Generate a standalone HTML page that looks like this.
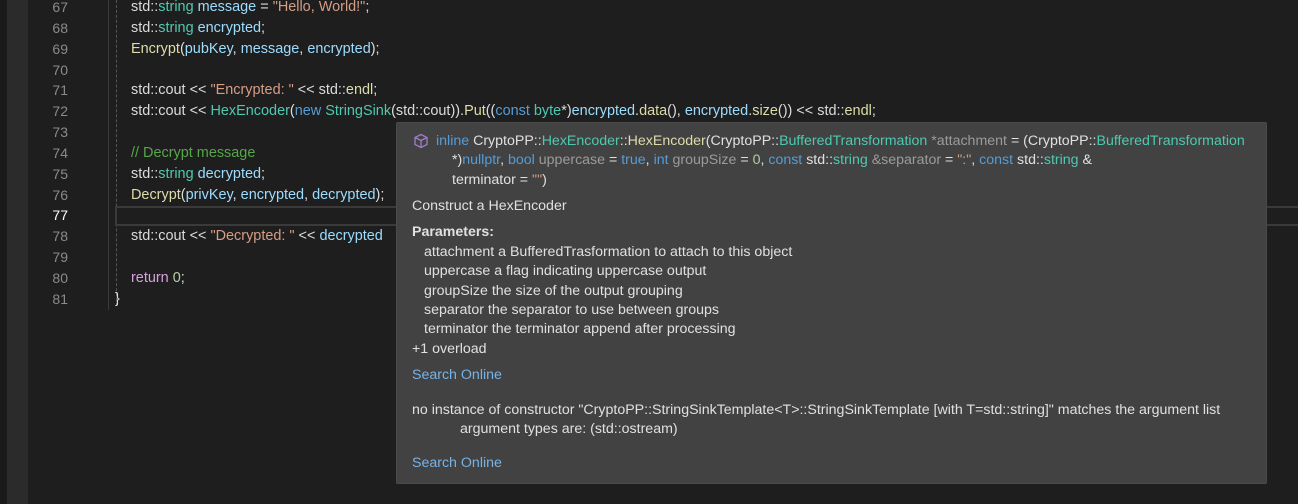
<!DOCTYPE html>
<html><head><meta charset="utf-8"><style>
*{margin:0;padding:0;box-sizing:border-box}
body{width:1298px;height:504px;background:#1e1e1e;overflow:hidden;position:relative;font-family:"Liberation Sans",sans-serif;font-size:14px;color:#dcdcdc}
.strip{position:absolute;left:0;top:0;width:7px;height:504px;background:#1a1a1a}
.strip2{position:absolute;left:7px;top:0;width:21px;height:504px;background:#2b2b2b}
.gl{position:absolute;left:108px;top:0;width:1px;height:310px;background:#3a3a3a}
.ln{position:absolute;left:40px;width:28px;text-align:right;color:#8a8a8a;white-space:nowrap}
.c{position:absolute;left:131px;white-space:nowrap;color:#dcdcdc;font-size:14.45px}
.guide{position:absolute;left:116px;top:0;height:306px;border-left:1px dashed #555}
.cur{position:absolute;left:115px;top:206px;width:1200px;height:20px;border:2px solid #3a3a3a}
.t{color:#4ec9b0}.v{color:#9cdcfe}.s{color:#d69d85}.f{color:#dcdcaa}.k{color:#569cd6}.cm{color:#57a64a}.p{color:#d8a0df}.n{color:#b5cea8}.g{color:#9b9b9b}
.tip{position:absolute;left:396px;top:122px;width:871px;height:362px;background:#424242;border:1px solid #4a4a4a;border-radius:2px}
.l{position:absolute;white-space:nowrap;color:#e0e0e0;font-size:14.2px}
.a{color:#78b3e6}
</style></head><body>
<div class="strip"></div><div class="strip2"></div><div class="gl"></div>
<div class="guide"></div>
<div class="cur"></div>
<div class="ln" style="top:-1px">67</div>
<div class="ln" style="top:20px">68</div>
<div class="ln" style="top:41px">69</div>
<div class="ln" style="top:62px">70</div>
<div class="ln" style="top:82px">71</div>
<div class="ln" style="top:103px">72</div>
<div class="ln" style="top:124px">73</div>
<div class="ln" style="top:145px">74</div>
<div class="ln" style="top:166px">75</div>
<div class="ln" style="top:187px">76</div>
<div class="ln" style="top:207px;color:#fff">77</div>
<div class="ln" style="top:228px">78</div>
<div class="ln" style="top:249px">79</div>
<div class="ln" style="top:270px">80</div>
<div class="ln" style="top:291px">81</div>
<div class="c" style="top:-1px">std::<span class="t">string</span> <span class="v">message</span> = <span class="s">"Hello, World!"</span>;</div>
<div class="c" style="top:20px">std::<span class="t">string</span> <span class="v">encrypted</span>;</div>
<div class="c" style="top:41px"><span class="f">Encrypt</span>(<span class="v">pubKey</span>, <span class="v">message</span>, <span class="v">encrypted</span>);</div>
<div class="c" style="top:82px">std::cout &lt;&lt; <span class="s">"Encrypted: "</span> &lt;&lt; std::<span class="f">endl</span>;</div>
<div class="c" style="top:103px">std::cout &lt;&lt; <span class="t">HexEncoder</span>(<span class="k">new</span> <span class="t">StringSink</span>(std::cout)).<span class="f">Put</span>((<span class="k">const</span> <span class="t">byte</span>*)<span class="v">encrypted</span>.<span class="f">data</span>(), <span class="v">encrypted</span>.<span class="f">size</span>()) &lt;&lt; std::<span class="f">endl</span>;</div>
<div class="c cm" style="top:145px">// Decrypt message</div>
<div class="c" style="top:166px">std::<span class="t">string</span> <span class="v">decrypted</span>;</div>
<div class="c" style="top:187px"><span class="f">Decrypt</span>(<span class="v">privKey</span>, <span class="v">encrypted</span>, <span class="v">decrypted</span>);</div>
<div class="c" style="top:228px">std::cout &lt;&lt; <span class="s">"Decrypted: "</span> &lt;&lt; <span class="v">decrypted</span></div>
<div class="c" style="top:270px"><span class="p">return</span> <span class="n">0</span>;</div>
<div class="c" style="top:291px;left:115px">}</div>

<div class="tip">
<svg style="position:absolute;left:16px;top:10px" width="16" height="16" viewBox="0 0 16 16" fill="none" stroke="#a07cc8" stroke-width="1.3"><path d="M8 1.5 14 4.5v7L8 14.5 2 11.5v-7z M2 4.5 8 7.5 14 4.5 M8 7.5v7"/></svg>
<div class="l" style="left:39px;top:10px"><span class="k">inline</span> CryptoPP::<span class="t">HexEncoder</span>::<span class="f">HexEncoder</span>(CryptoPP::<span class="t">BufferedTransformation</span> <span class="g">*attachment</span> = (CryptoPP::<span class="t">BufferedTransformation</span></div>
<div class="l" style="left:55px;top:29px">*)<span class="k">nullptr</span>, <span class="k">bool</span> <span class="g">uppercase</span> = <span class="k">true</span>, <span class="k">int</span> <span class="g">groupSize</span> = <span class="n">0</span>, <span class="k">const</span> std::<span class="t">string</span> <span class="g">&amp;separator</span> = <span class="s">":"</span>, <span class="k">const</span> std::<span class="t">string</span> &amp;</div>
<div class="l g" style="left:55px;top:49px">terminator = <span class="s">""</span>)</div>
<div class="l" style="left:15px;top:75px">Construct a HexEncoder</div>
<div class="l" style="left:15px;top:101px;font-weight:bold">Parameters:</div>
<div class="l" style="left:27px;top:121px">attachment a BufferedTrasformation to attach to this object</div>
<div class="l" style="left:27px;top:140px">uppercase a flag indicating uppercase output</div>
<div class="l" style="left:27px;top:160px">groupSize the size of the output grouping</div>
<div class="l" style="left:27px;top:179px">separator the separator to use between groups</div>
<div class="l" style="left:27px;top:198px">terminator the terminator append after processing</div>
<div class="l" style="left:15px;top:218px">+1 overload</div>
<div class="l a" style="left:15px;top:244px">Search Online</div>
<div class="l" style="left:15px;top:279px">no instance of constructor "CryptoPP::StringSinkTemplate&lt;T&gt;::StringSinkTemplate [with T=std::string]" matches the argument list</div>
<div class="l" style="left:63px;top:298px">argument types are: (std::ostream)</div>
<div class="l a" style="left:15px;top:332px">Search Online</div>
</div>
</body></html>
